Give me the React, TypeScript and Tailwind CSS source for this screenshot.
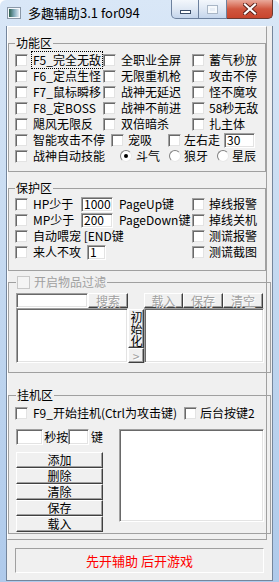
import React from 'react';

const sunken =
  'bg-white border border-t-[#a0a0a0] border-l-[#a0a0a0] border-r-white border-b-white shadow-[inset_1px_1px_0_#696969,inset_-1px_-1px_0_#e3e3e3]';
const raised =
  'bg-[#f0f0f0] border border-t-white border-l-white border-r-[#404040] border-b-[#404040] shadow-[inset_-1px_-1px_0_#a0a0a0]';

function Check({ disabled }: { disabled?: boolean }) {
  return (
    <span
      className={
        disabled
          ? 'block w-[13px] h-[13px] shrink-0 border border-[#c8c8c8] bg-[#f4f4f4]'
          : 'block w-[13px] h-[13px] shrink-0 bg-white border border-t-[#a0a0a0] border-l-[#a0a0a0] border-r-[#f0f0f0] border-b-[#f0f0f0] shadow-[inset_1px_1px_0_#696969,inset_-1px_-1px_0_#e3e3e3]'
      }
    />
  );
}

function Radio({ on }: { on?: boolean }) {
  return (
    <span className="flex items-center justify-center w-[12px] h-[12px] shrink-0 rounded-full bg-white border border-t-[#808080] border-l-[#808080] border-r-[#e8e8e8] border-b-[#e8e8e8]">
      {on && <span className="block w-[4px] h-[4px] rounded-full bg-black" />}
    </span>
  );
}

function Item({ label, w, gap = 'gap-[5px]' }: { label: string; w?: string; gap?: string }) {
  return (
    <div className={`flex items-center ${gap} ${w ?? ''}`}>
      <Check />
      <span className="whitespace-nowrap">{label}</span>
    </div>
  );
}

function Field({ value, w }: { value?: string; w: string }) {
  return (
    <div className={`${sunken} ${w} h-[15px] flex items-center pl-[2px] text-[12px] leading-[12px]`}>
      {value}
    </div>
  );
}

function Btn({ label, w, h = 'h-[16px]', disabled }: { label: string; w: string; h?: string; disabled?: boolean }) {
  return (
    <div
      className={`${raised} ${w} ${h} flex items-center justify-center leading-[12px] ${
        disabled ? 'text-[#a0a0a0] [text-shadow:1px_1px_0_#fff]' : 'text-black'
      }`}
    >
      {label}
    </div>
  );
}

function Group({ legend, className, children }: { legend: React.ReactNode; className: string; children: React.ReactNode }) {
  return (
    <fieldset className={`border border-[#a0a0a0] px-[6px] ${className}`}>
      <legend className="px-[1px] h-[14px] leading-[14px]">{legend}</legend>
      {children}
    </fieldset>
  );
}

function TitleBar() {
  return (
    <div className="h-[26px] flex items-start">
      <svg className="ml-[7px] mt-[7px]" width="14" height="12" viewBox="0 0 14 12">
        <defs>
          <linearGradient id="ig" x1="0" x2="1" y1="0" y2="0">
            <stop offset="0" stopColor="#2d5f4e" />
            <stop offset="0.5" stopColor="#7fa8b8" />
            <stop offset="1" stopColor="#dfe9f3" />
          </linearGradient>
        </defs>
        <rect x="0.5" y="0.5" width="13" height="11" fill="#f4f7fb" stroke="#8a98a8" />
        <rect x="2" y="2" width="10" height="8" fill="url(#ig)" />
      </svg>
      <span className="ml-[7px] mt-[4px] text-[13px] leading-[18px] text-black font-['Noto_Sans_CJK_SC',sans-serif]">
        多趣辅助3.1 for094
      </span>
      <div className="ml-auto mr-[6px] flex">
        <div className="w-[28px] h-[19px] rounded-bl-[5px] border border-t-0 border-[#6d819e] bg-gradient-to-b from-[#f3f7fc] via-[#dfe8f4] to-[#c4d5ec] flex items-center justify-center">
          <span className="block w-[11px] h-[4px] mt-[5px] bg-white border border-[#3a4d68]" />
        </div>
        <div className="w-[28px] h-[19px] border border-t-0 border-l-0 border-[#6d819e] bg-gradient-to-b from-[#f3f7fc] via-[#dfe8f4] to-[#c4d5ec] flex items-center justify-center">
          <span className="block w-[11px] h-[9px] border border-[#a9b6c6] bg-[#e8eef6] shadow-[inset_0_0_0_2px_#f6f9fc]" />
        </div>
        <div className="w-[46px] h-[19px] rounded-br-[5px] border border-t-0 border-l-0 border-[#6b3a32] bg-gradient-to-b from-[#e9a99b] via-[#d0563f] to-[#c8452d] flex items-center justify-center">
          <svg width="14" height="12" viewBox="0 0 14 12">
            <path d="M2 1.5 L12 10.5 M12 1.5 L2 10.5" stroke="#5a2018" strokeWidth="4" strokeLinecap="square" />
            <path d="M2 1.5 L12 10.5 M12 1.5 L2 10.5" stroke="#ffffff" strokeWidth="2.2" strokeLinecap="square" />
          </svg>
        </div>
      </div>
    </div>
  );
}

export default function App() {
  return (
    <div className="w-[279px] h-[582px] overflow-hidden rounded-t-[6px] bg-gradient-to-b from-[#d9e7f7] via-[#c3d8f0] to-[#afcaeb] text-[12px] leading-[16px] text-black font-['Noto_Sans_CJK_SC','Noto_Sans',sans-serif]">
      <TitleBar />
      <div className="ml-[6px] w-[267px] h-[555px] bg-[#f0f0f0] border border-t-0 border-[#75869c]">
        {/* main panel */}
        <div className="w-[260px] border border-t-white border-l-white border-r-[#a0a0a0] border-b-[#a0a0a0] pb-[5px]">
          {/* 功能区 */}
          <Group legend="功能区" className="mt-[9px] pt-[2px] pb-[7px]">
            <div className="grid grid-cols-[88px_89px_1fr]">
              <div className="flex items-center gap-[4px] h-[16px]">
                <Check />
                <span className="whitespace-nowrap outline-1 outline-dotted outline-black px-[1px]">F5_完全无敌</span>
              </div>
              <Item label="全职业全屏" />
              <Item label="蓄气秒放" gap="gap-[4px]" />
              <Item label="F6_定点生怪" />
              <Item label="无限重机枪" />
              <Item label="攻击不停" gap="gap-[4px]" />
              <Item label="F7_鼠标瞬移" />
              <Item label="战神无延迟" />
              <Item label="怪不魔攻" gap="gap-[4px]" />
              <Item label="F8_定BOSS" />
              <Item label="战神不前进" />
              <Item label="58秒无敌" gap="gap-[4px]" />
              <Item label="飓风无限反" />
              <Item label="双倍暗杀" />
              <Item label="扎主体" gap="gap-[4px]" />
            </div>
            <div className="flex items-center h-[16px]">
              <Item label="智能攻击不停" w="w-[96px]" />
              <Item label="宠吸" w="w-[57px]" gap="gap-[4px]" />
              <Item label="左右走" gap="gap-[3px]" />
              <div className="ml-[4px]">
                <Field value="30" w="w-[31px]" />
              </div>
            </div>
            <div className="flex items-center h-[16px]">
              <Item label="战神自动技能" w="w-[105px]" />
              <div className="flex items-center gap-[4px] w-[49px]">
                <Radio on />
                <span>斗气</span>
              </div>
              <div className="flex items-center gap-[3px] w-[48px]">
                <Radio />
                <span>狼牙</span>
              </div>
              <div className="flex items-center gap-[3px]">
                <Radio />
                <span>星辰</span>
              </div>
            </div>
          </Group>

          {/* 保护区 */}
          <Group legend="保护区" className="mt-[9px] pt-[1px] pb-[10px]">
            <div className="flex items-center h-[16px]">
              <div className="flex items-center w-[177px]">
                <Check />
                <span className="ml-[5px] w-[48px]">HP少于</span>
                <Field value="1000" w="w-[32px]" />
                <span className="ml-[6px]">PageUp键</span>
              </div>
              <Item label="掉线报警" gap="gap-[4px]" />
            </div>
            <div className="flex items-center h-[16px]">
              <div className="flex items-center w-[177px]">
                <Check />
                <span className="ml-[5px] w-[48px]">MP少于</span>
                <Field value="200" w="w-[32px]" />
                <span className="ml-[6px]">PageDown键</span>
              </div>
              <Item label="掉线关机" gap="gap-[4px]" />
            </div>
            <div className="flex items-center h-[16px]">
              <Item label="自动喂宠 [END键" w="w-[177px]" />
              <Item label="测谎报警" gap="gap-[4px]" />
            </div>
            <div className="flex items-center h-[16px]">
              <div className="flex items-center w-[177px]">
                <Check />
                <span className="ml-[5px] w-[54px]">来人不攻</span>
                <Field value="1" w="w-[19px]" />
              </div>
              <Item label="测谎截图" gap="gap-[4px]" />
            </div>
          </Group>

          {/* 物品过滤 */}
          <Group
            legend={
              <span className="flex items-center gap-[4px]">
                <Check disabled />
                <span className="text-[#a0a0a0]">开启物品过滤</span>
              </span>
            }
            className="mt-[4px] pt-[4px] pb-[9px] pl-[7px]"
          >
            <div className="flex">
              <div className="w-[112px] flex flex-col">
                <div className="flex h-[15px]">
                  <div className={`${sunken} w-[72px] h-[15px]`} />
                  <Btn label="搜索" w="w-[40px]" h="h-[15px]" disabled />
                </div>
                <div className={`${sunken} h-[55px]`} />
              </div>
              <div className="w-[16px] flex flex-col pt-[16px]">
                <div className={`${raised} h-[39px] flex items-center justify-center`}>
                  <span className="[writing-mode:vertical-rl] leading-[14px] tracking-[0px]">初始化</span>
                </div>
                <Btn label=">" w="w-[16px]" h="h-[15px]" disabled />
              </div>
              <div className="w-[120px] flex flex-col">
                <div className="flex h-[15px]">
                  <Btn label="载入" w="w-[39px]" h="h-[15px]" disabled />
                  <Btn label="保存" w="w-[40px]" h="h-[15px]" disabled />
                  <Btn label="清空" w="w-[40px]" h="h-[15px]" disabled />
                </div>
                <div className={`${sunken} h-[55px]`} />
              </div>
            </div>
          </Group>

          {/* 挂机区 */}
          <Group legend="挂机区" className="mt-[15px] pt-[3px] pb-[1px] pl-[7px]">
            <div className="flex items-center h-[16px] -ml-[1px]">
              <Item label="F9_开始挂机(Ctrl为攻击键)" w="w-[169px]" />
              <Item label="后台按键2" gap="gap-[3px]" />
            </div>
            <div className="flex mt-[8px]">
              <div className="w-[87px] flex flex-col">
                <div className="flex items-center h-[16px]">
                  <div className={`${sunken} w-[29px] h-[16px]`} />
                  <span className="ml-[1px] w-[26px]">秒按</span>
                  <div className={`${sunken} w-[22px] h-[16px]`} />
                  <span className="ml-[2px]">键</span>
                </div>
                <div className="mt-[7px] flex flex-col">
                  <Btn label="添加" w="w-[87px]" />
                  <Btn label="删除" w="w-[87px]" />
                  <Btn label="清除" w="w-[87px]" />
                  <Btn label="保存" w="w-[87px]" />
                  <Btn label="载入" w="w-[87px]" />
                </div>
              </div>
              <div className={`${sunken} ml-[16px] w-[145px] h-[93px]`} />
            </div>
          </Group>
        </div>

        {/* status */}
        <div className="mt-[8px] ml-[8px] w-[249px] h-[25px] border border-t-[#a0a0a0] border-l-[#a0a0a0] border-r-white border-b-white flex items-center justify-center text-[#ff0000] text-[13px]">
          先开辅助 后开游戏
        </div>
      </div>
    </div>
  );
}
